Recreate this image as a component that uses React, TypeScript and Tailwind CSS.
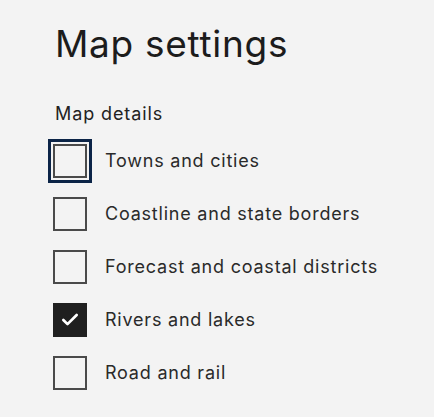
import { Check } from 'lucide-react'

const ITEMS = [
  { id: 'towns', label: 'Towns and cities', checked: false, focused: true },
  { id: 'coast', label: 'Coastline and state borders', checked: false },
  { id: 'forecast', label: 'Forecast and coastal districts', checked: false },
  { id: 'rivers', label: 'Rivers and lakes', checked: true },
  { id: 'road', label: 'Road and rail', checked: false },
]

export default function App() {
  return (
    <div
      className="min-h-[417px] w-full bg-[#f3f3f3] pl-[55px] pt-[22px] text-[#222]"
      style={{ fontFamily: 'Inter, "Noto Sans", sans-serif' }}
    >
      <h1 className="text-[37px] leading-[44px] font-normal tracking-[0.7px] text-[#1c1c1c]">Map settings</h1>

      <fieldset className="mt-[36px]">
        <legend className="text-[18px] leading-[24px] tracking-[0.9px] text-[#222]">Map details</legend>
        <div className="mt-[8px] flex flex-col">
          {ITEMS.map((item) => (
            <label key={item.id} className="flex h-[53px] items-center gap-[18px]">
              <span
                className={`-ml-[2px] flex h-[34px] w-[34px] shrink-0 items-center justify-center border-2 ${
                  item.checked ? 'border-[#1f1f1f] bg-[#1f1f1f]' : 'border-[#4a4a4a] bg-[#f3f3f3]'
                } ${item.focused ? 'outline-[3px] outline-offset-[2px] outline-solid outline-[#0b2447]' : ''}`}
              >
                {item.checked && <Check size={20} strokeWidth={3.2} className="text-white" />}
              </span>
              <span className="text-[18px] leading-[24px] tracking-[0.78px] text-[#2a2a2a]">{item.label}</span>
            </label>
          ))}
        </div>
      </fieldset>
    </div>
  )
}
